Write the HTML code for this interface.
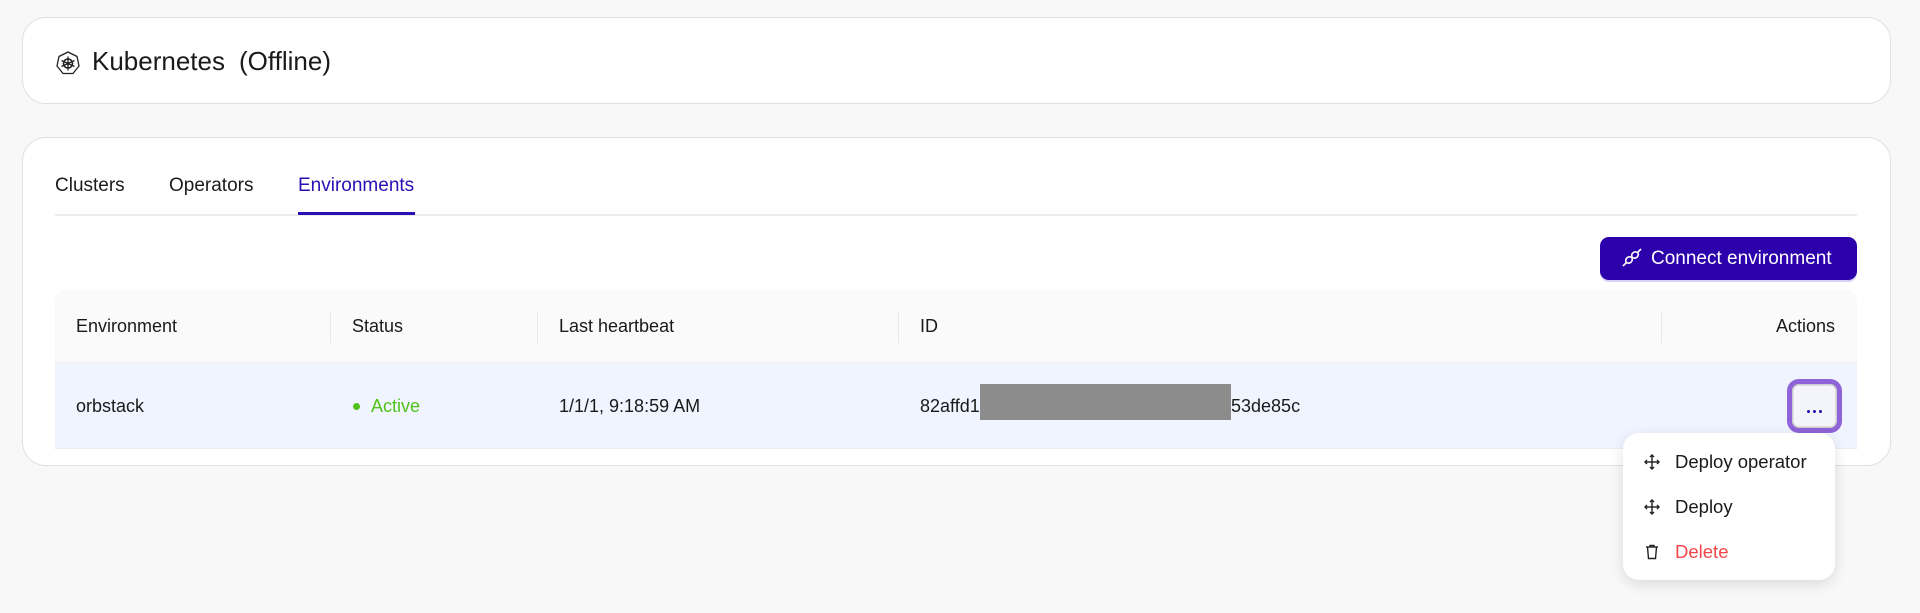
<!DOCTYPE html>
<html><head><meta charset="utf-8"><style>
*{box-sizing:border-box;margin:0;padding:0}
body{width:1920px;height:613px;background:#f8f8f8;font-family:"Liberation Sans",sans-serif;color:#1a1a1a;position:relative;overflow:hidden}
.card{position:absolute;left:22px;width:1869px;background:#fff;border:1.5px solid #e0e0e0;border-radius:24px}
.abs{position:absolute;white-space:nowrap}
</style></head><body>
<div class="card" style="top:17px;height:87px"></div>
<svg class="abs" style="left:55px;top:50px" width="26" height="26" viewBox="0 0 26 26"><polygon points="13,2 22,6.5 24,16 18,23.5 8,23.5 2,16 4,6.5" fill="none" stroke="#222" stroke-width="1.3"/><circle cx="13" cy="13.5" r="4.5" fill="none" stroke="#222" stroke-width="1.6"/><g stroke="#222" stroke-width="1.3"><line x1="13" y1="6.5" x2="13" y2="20.5"/><line x1="6.5" y1="10.5" x2="19.5" y2="16.5"/><line x1="6.5" y1="16.5" x2="19.5" y2="10.5"/></g><circle cx="13" cy="13.5" r="1.5" fill="#222"/></svg>
<div class="abs" style="left:92px;top:46px;font-size:26px">Kubernetes<span style="margin-left:14px">(Offline)</span></div>

<div class="card" style="top:137px;height:329px"></div>
<div class="abs" style="left:55px;top:175px;font-size:19px">Clusters</div>
<div class="abs" style="left:169px;top:175px;font-size:19px">Operators</div>
<div class="abs" style="left:298px;top:175px;font-size:19px;color:#2a0fb5">Environments</div>
<div class="abs" style="left:55px;top:214px;width:1802px;height:1.5px;background:#ececec"></div>
<div class="abs" style="left:298px;top:212px;width:117px;height:3px;background:#2a0fb5"></div>

<div class="abs" style="left:1600px;top:237px;width:257px;height:43px;background:#2c00aa;border-radius:9px;box-shadow:0 2px 0 #d9d0f5;color:#fff;font-size:19px;line-height:43px;padding-left:51px">Connect environment</div>
<svg class="abs" style="left:1621px;top:248px" width="22" height="20" viewBox="0 0 22 20"><g fill="none" stroke="#fff" stroke-width="1.6"><ellipse cx="8" cy="12" rx="3.5" ry="3" transform="rotate(-40 8 12)"/><ellipse cx="14" cy="7" rx="3.5" ry="3" transform="rotate(-40 14 7)"/><line x1="2" y1="18" x2="5.5" y2="14.5"/><line x1="17" y1="4" x2="20" y2="1"/></g></svg>

<div class="abs" style="left:55px;top:290px;width:1802px;height:73px;background:#fafafa;border-radius:12px 12px 0 0;border-bottom:1px solid #eee"></div>
<div class="abs" style="left:330px;top:311px;width:1px;height:32px;background:#e8e8e8"></div>
<div class="abs" style="left:537px;top:311px;width:1px;height:32px;background:#e8e8e8"></div>
<div class="abs" style="left:898px;top:311px;width:1px;height:32px;background:#e8e8e8"></div>
<div class="abs" style="left:1661px;top:311px;width:1px;height:32px;background:#e8e8e8"></div>
<div class="abs" style="left:76px;top:316px;font-size:18px">Environment</div>
<div class="abs" style="left:352px;top:316px;font-size:18px">Status</div>
<div class="abs" style="left:559px;top:316px;font-size:18px">Last heartbeat</div>
<div class="abs" style="left:920px;top:316px;font-size:18px">ID</div>
<div class="abs" style="left:1770px;top:316px;font-size:18px;width:65px;text-align:right">Actions</div>

<div class="abs" style="left:55px;top:363px;width:1802px;height:86px;background:#f0f4fe;border-bottom:1px solid #e8ecf4"></div>
<div class="abs" style="left:76px;top:396px;font-size:18px">orbstack</div>
<div class="abs" style="left:353px;top:403px;width:7px;height:7px;border-radius:50%;background:#4fc21a"></div>
<div class="abs" style="left:371px;top:396px;font-size:18px;color:#4fc21a">Active</div>
<div class="abs" style="left:559px;top:396px;font-size:18px">1/1/1, 9:18:59 AM</div>
<div class="abs" style="left:920px;top:396px;font-size:18px">82affd1</div>
<div class="abs" style="left:980px;top:384px;width:251px;height:36px;background:#8c8c8c"></div>
<div class="abs" style="left:1231px;top:396px;font-size:18px">53de85c</div>

<div class="abs" style="left:1787px;top:379px;width:55px;height:54px;border:5px solid #8f63d8;border-radius:12px;background:#f4f5fb;box-shadow:inset 0 0 0 1.5px #ccc"></div>
<div class="abs" style="left:1807px;top:410px;width:3px;height:3px;border-radius:50%;background:#2a0fb5"></div>
<div class="abs" style="left:1813px;top:410px;width:3px;height:3px;border-radius:50%;background:#2a0fb5"></div>
<div class="abs" style="left:1819px;top:410px;width:3px;height:3px;border-radius:50%;background:#2a0fb5"></div>

<div class="abs" style="left:1623px;top:433px;width:212px;height:147px;background:#fff;border-radius:16px;box-shadow:0 4px 14px rgba(0,0,0,0.12)"></div>
<svg class="abs" style="left:1644px;top:454px" width="16" height="16" viewBox="0 0 16 16"><g fill="none" stroke="#222" stroke-width="1.4"><line x1="8" y1="1" x2="8" y2="15"/><line x1="1" y1="8" x2="15" y2="8"/><path d="M6 3L8 1L10 3M6 13L8 15L10 13M3 6L1 8L3 10M13 6L15 8L13 10"/></g></svg>
<div class="abs" style="left:1675px;top:451px;font-size:18.5px">Deploy operator</div>
<svg class="abs" style="left:1644px;top:499px" width="16" height="16" viewBox="0 0 16 16"><g fill="none" stroke="#222" stroke-width="1.4"><line x1="8" y1="1" x2="8" y2="15"/><line x1="1" y1="8" x2="15" y2="8"/><path d="M6 3L8 1L10 3M6 13L8 15L10 13M3 6L1 8L3 10M13 6L15 8L13 10"/></g></svg>
<div class="abs" style="left:1675px;top:496px;font-size:18.5px">Deploy</div>
<svg class="abs" style="left:1645px;top:544px" width="14" height="16" viewBox="0 0 14 16"><g fill="none" stroke="#222" stroke-width="1.4"><line x1="1" y1="3" x2="13" y2="3"/><path d="M5 3V1.5H9V3M2.5 3L3.5 14.5H10.5L11.5 3"/></g></svg>
<div class="abs" style="left:1675px;top:541px;font-size:18.5px;color:#f5454a">Delete</div>
</body></html>
